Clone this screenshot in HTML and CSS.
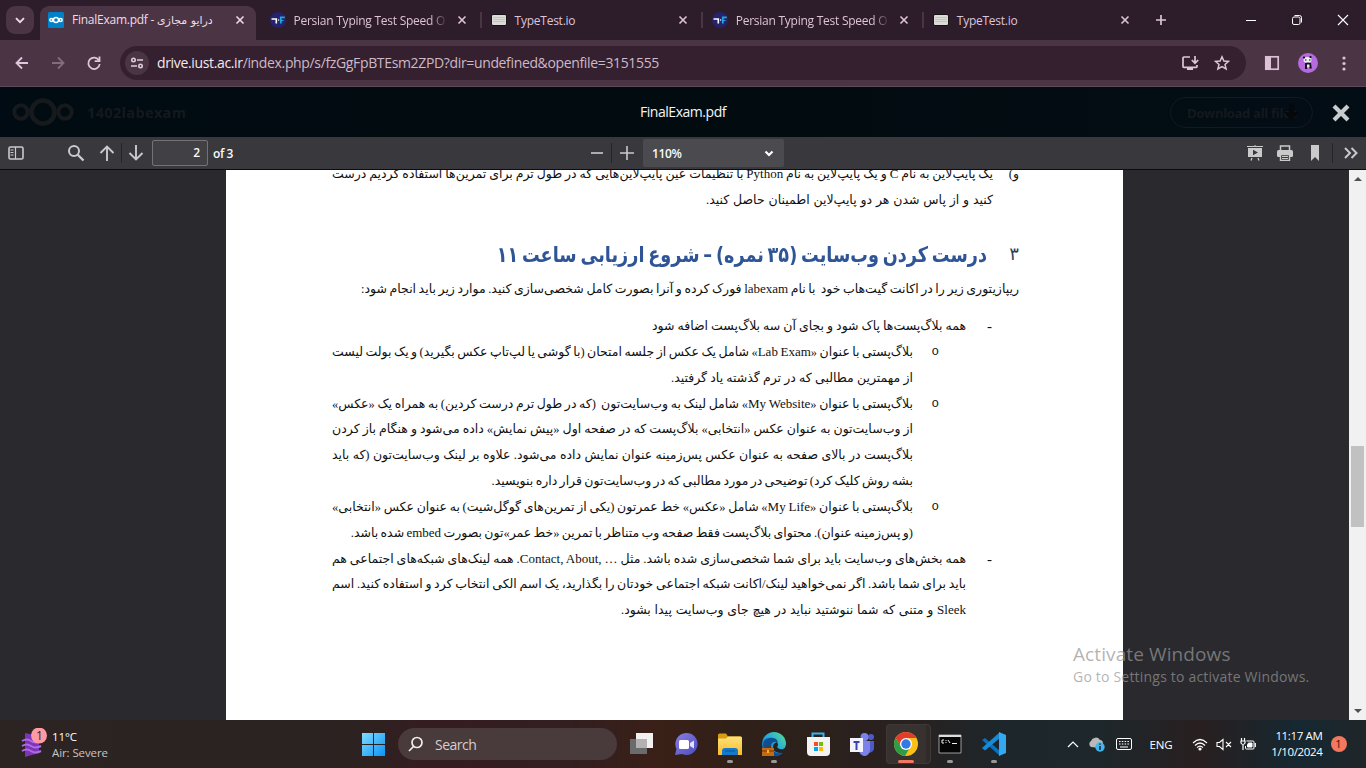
FILE: index.html
```html
<!DOCTYPE html>
<html lang="en">
<head>
<meta charset="utf-8">
<title>FinalExam.pdf</title>
<link rel="stylesheet" href="styles.css">
</head>
<body>
<svg class="defs" width="0" height="0">
  <defs>
    <symbol id="x" viewBox="0 0 10 10"><path d="M1.5 1.5l7 7M8.500 1.500l-7 7" fill="none" stroke="currentColor" stroke-width="1.600"/></symbol>
    <symbol id="tf" viewBox="0 0 16 16"><circle cx="8" cy="8" r="8" fill="#25236b"/><path d="M1.500 7h4.800v4.500" fill="none" stroke="#fff" stroke-width="1.600"/><path d="M10.800 11.500V5.300h4" fill="none" stroke="#29a3df" stroke-width="1.800"/><path d="M11 8.500h2.500" stroke="#29a3df" stroke-width="1.100"/><circle cx="8.600" cy="8" r=".7" fill="#fff"/></symbol>
    <symbol id="kb" viewBox="0 0 16 12"><rect x=".5" y=".5" width="15" height="11" rx="1.500" fill="#dcdcd8" stroke="#161313"/><path d="M2 3.500h12M2 5.500h12M2 7.500h12" stroke="#b9b9b5" stroke-width=".7"/></symbol>
    <linearGradient id="gw" x1="0" y1="0" x2="1" y2="1"><stop offset="0" stop-color="#7fdcff"/><stop offset="1" stop-color="#0a93f5"/></linearGradient>
    <linearGradient id="gf" x1="0" y1="0" x2="0" y2="1"><stop offset="0" stop-color="#ffe07a"/><stop offset="1" stop-color="#f8bd2c"/></linearGradient>
    <linearGradient id="ge" x1="0" y1="1" x2="1" y2="0"><stop offset="0" stop-color="#0b62b8"/><stop offset=".5" stop-color="#21a8de"/><stop offset="1" stop-color="#5fe08a"/></linearGradient>
    <linearGradient id="gc" x1="0" y1="0" x2="1" y2="1"><stop offset="0" stop-color="#8b7fe0"/><stop offset="1" stop-color="#4b4cc0"/></linearGradient>
  </defs>
</svg>

<div class="tabstrip">
  <div class="tabsearch"><svg width="10" height="7" viewBox="0 0 10 7"><path d="M1 1.200l4 4 4-4" fill="none" stroke="#eadbe5" stroke-width="1.900"/></svg></div>
  <div class="tab active">
    <svg class="fav" width="16" height="16"><rect width="16" height="16" rx="1.500" fill="#0082c9"/><g fill="none" stroke="#fff" stroke-width="1.400"><circle cx="8" cy="8" r="2.500"/><circle cx="3.300" cy="8" r="1.500"/><circle cx="12.700" cy="8" r="1.500"/></g></svg>
    <span class="title">FinalExam.pdf - <bdi class="fa">درایو مجازی</bdi></span>
    <svg class="x"><use href="#x"/></svg>
  </div>
  <div class="tab"><svg class="fav" width="16" height="16"><use href="#tf"/></svg><span class="title fade">Persian Typing Test Speed O</span><svg class="x"><use href="#x"/></svg></div>
  <div class="tab sep"><svg class="fav" width="16" height="12"><use href="#kb"/></svg><span class="title">TypeTest.io</span><svg class="x"><use href="#x"/></svg></div>
  <div class="tab sep"><svg class="fav" width="16" height="16"><use href="#tf"/></svg><span class="title fade">Persian Typing Test Speed O</span><svg class="x"><use href="#x"/></svg></div>
  <div class="tab sep"><svg class="fav" width="16" height="12"><use href="#kb"/></svg><span class="title">TypeTest.io</span><svg class="x"><use href="#x"/></svg></div>
  <div class="newtab"><svg width="12" height="12"><path d="M6 1v10M1 6h10" stroke="#dcc3d6" stroke-width="1.700"/></svg></div>
  <div class="winbtns">
    <svg width="12" height="12"><path d="M1 6.500h10" stroke="#fff"/></svg>
    <svg width="12" height="12" fill="none" stroke="#fff"><rect x="1.500" y="3" width="7.500" height="7.500" rx="1.500"/><path d="M3.500 1.500h5q2 0 2 2v5"/></svg>
    <svg width="12" height="12"><path d="M1 1l10 10M11 1L1 11" stroke="#fff" stroke-width="1.100"/></svg>
  </div>
</div>

<div class="toolbar">
  <div class="nav">
    <svg width="16" height="16" fill="none" stroke="#e0c6da" stroke-width="1.800"><path d="M14 8H3M8 2.500L2.500 8 8 13.500"/></svg>
    <svg width="16" height="16" fill="none" stroke="#836d7d" stroke-width="1.800"><path d="M2 8h11M8 2.500L13.500 8 8 13.500"/></svg>
    <svg width="16" height="16" fill="none" stroke="#e0c6da" stroke-width="1.800"><path d="M13 5.500A5.700 5.700 0 1 0 13.700 9"/><path d="M13.500 1.500v4.700H8.700"/></svg>
  </div>
  <div class="omnibox">
    <div class="site"><svg width="14" height="12" fill="none" stroke="#e0cbdc" stroke-width="1.600"><circle cx="3.500" cy="3" r="1.700"/><path d="M7 3h6M1 9h6"/><circle cx="10.500" cy="9" r="1.700"/></svg></div>
    <span class="url"><b>drive.iust.ac.ir</b>/index.php/s/fzGgFpBTEsm2ZPD?dir=undefined&amp;openfile=3151555</span>
    <svg class="install" width="18" height="16" fill="none" stroke="#dec6d9" stroke-width="1.700"><path d="M9 2H3Q2 2 2 3v8.500q0 .8.800.8h12.400q.8 0 .8-.8V10"/><path d="M6 14h6" stroke-width="2"/><path d="M14 1v7M10.800 5L14 8.200 17.200 5"/></svg>
    <svg width="16" height="16" fill="none" stroke="#dec6d9" stroke-width="1.500"><path d="M8 1.800l1.900 4.200 4.600.4-3.500 3 1.100 4.500L8 11.500l-4.100 2.400L5 9.400l-3.500-3 4.600-.4z"/></svg>
  </div>
  <div class="side">
    <svg width="16" height="16"><rect x="1.800" y="1.800" width="12.400" height="12.400" fill="none" stroke="#dcc0d6" stroke-width="1.700"/><path d="M1 1h6v14H1z" fill="#dcc0d6"/></svg>
    <svg width="20" height="20"><circle cx="10" cy="10" r="10" fill="#b56ae0"/><ellipse cx="9.500" cy="7" rx="4" ry="3" fill="#eee"/><circle cx="6" cy="4.500" r="1.100"/><circle cx="12.500" cy="4" r="1.100"/><path d="M7 10q3-1 6 0l.8 5.500H11.500L10 13l-1 3H7z" fill="#171320"/><path d="M9 11.500h2.500v3H9z" fill="#eee"/><path d="M7 7h1.500M11 7h1.500" stroke="#000"/></svg>
    <svg width="4" height="16" fill="#dcc3d6"><circle cx="2" cy="3" r="1.600"/><circle cx="2" cy="8.500" r="1.600"/><circle cx="2" cy="14" r="1.600"/></svg>
  </div>
</div>

<div class="cloudbar">
  <svg width="62" height="28" fill="none" stroke="#171a1d"><circle cx="31" cy="14" r="11.500" stroke-width="4.500"/><circle cx="9" cy="14" r="6.700" stroke-width="4"/><circle cx="53" cy="14" r="6.700" stroke-width="4"/></svg>
  <b class="share">1402labexam</b>
  <span class="fname">FinalExam.pdf</span>
  <div class="download">Download all files<svg width="16" height="20"><path d="M5 0h5v9h5l-7.500 9L0 9h5z" fill="#05090c"/></svg></div>
  <svg class="close" width="20" height="20"><path d="M3 3l14 14M17 3L3 17" stroke="#c9cccd" stroke-width="4.200"/></svg>
</div>

<div class="pdfbar">
  <svg class="i-side" width="16" height="14"><rect x="1" y="1" width="14" height="12" rx="1.500" fill="none" stroke="#cacacb" stroke-width="1.600"/><path d="M7.500 1v12M2.500 4h3M2.500 6.500h3M2.500 9h3" stroke="#cacacb" stroke-width="1.200"/></svg>
  <svg class="i-find" width="18" height="18" fill="none" stroke="#cacacb"><circle cx="7" cy="7" r="5" stroke-width="2"/><path d="M10.500 10.500l6 6" stroke-width="2.400"/></svg>
  <svg class="i-up" width="16" height="16" fill="none" stroke="#cacacb" stroke-width="1.900"><path d="M8 16V2M1.500 8L8 1.500 14.500 8"/></svg>
  <i class="vs"></i>
  <svg class="i-down" width="16" height="16" fill="none" stroke="#cacacb" stroke-width="1.900"><path d="M8 0v14M1.500 8L8 14.500 14.500 8"/></svg>
  <span class="pageno">2</span><span class="of">of 3</span>
  <div class="zoom">
    <svg width="14" height="14"><path d="M1 7h12" stroke="#cacacb" stroke-width="1.600"/></svg><i class="vs"></i>
    <svg width="14" height="14"><path d="M0 7h14M7 0v14" stroke="#cacacb" stroke-width="1.600"/></svg>
    <div class="select">110%<svg width="10" height="7"><path d="M1.500 1.500L5 5l3.500-3.500" fill="none" stroke="#fff" stroke-width="2.200"/></svg></div>
  </div>
  <div class="right">
    <svg width="16" height="16"><path d="M0 1.500h16" stroke="#cacacb"/><path d="M7.500 0h1v2h-1zM1 3h14v9H1z" fill="#cacacb"/><path d="M6 4.800l5 2.700-5 2.700z" fill="#38383d"/><path d="M5 13l-1 2.500M11 13l1 2.500" stroke="#cacacb" stroke-width="1.300"/></svg>
    <svg width="16" height="16"><path d="M3.500 5V1h9v4" fill="none" stroke="#cacacb" stroke-width="1.500"/><rect y="5" width="16" height="7" rx="1.500" fill="#cacacb"/><path d="M3.500 9.500h9v6h-9z" fill="#38383d" stroke="#cacacb" stroke-width="1.400"/><path d="M5 11.500h6M5 13.500h6" stroke="#cacacb"/></svg>
    <svg width="8" height="16"><path d="M0 0h8v16l-4-4-4 4z" fill="#cacacb"/></svg>
    <i class="vs"></i>
    <svg width="14" height="12" fill="none" stroke="#cacacb" stroke-width="2"><path d="M1 1l5 5-5 5M7.500 1l5 5-5 5"/></svg>
  </div>
</div>

<div class="viewer">
  <div class="page" lang="fa" dir="rtl">
    <div class="row first"><span class="mk">و)</span><p class="w661">یک پایپ‌لاین به نام <bdi>C</bdi> و یک پایپ‌لاین به نام <bdi>Python</bdi> با تنظیمات عین پایپ‌لاین‌هایی که در طول ترم برای تمرین‌ها استفاده کردیم درست</p></div>
    <div class="row i0"><p class="w287">کنید و از پاس شدن هر دو پایپ‌لاین اطمینان حاصل کنید.</p></div>
    <h2><span>۳</span><strong>درست کردن وب‌سایت (۳۵ نمره) – شروع ارزیابی ساعت ۱۱</strong></h2>
    <div class="row para"><p class="w658">ریپازیتوری زیر را در اکانت گیت‌هاب خود&nbsp; با نام <bdi>labexam</bdi> فورک کرده و آنرا بصورت کامل شخصی‌سازی کنید. موارد زیر باید انجام شود:</p></div>
    <div class="row i1"><span class="mk">-</span><p class="w314">همه بلاگ‌پست‌ها پاک شود و بجای آن سه بلاگ‌پست اضافه شود</p></div>
    <div class="row i2"><span class="mk">o</span><p>بلاگ‌پستی با عنوان «<bdi>Lab&nbsp;Exam</bdi>» شامل یک عکس از جلسه امتحان (با گوشی یا لپ‌تاپ عکس بگیرید) و یک بولت لیست</p></div>
    <div class="row i2"><p class="w242">از مهمترین مطالبی که در ترم گذشته یاد گرفتید.</p></div>
    <div class="row i2"><span class="mk">o</span><p>بلاگ‌پستی با عنوان «<bdi>My&nbsp;Website</bdi>» شامل لینک به وب‌سایت‌تون&nbsp; (که در طول ترم درست کردین) به همراه یک «عکس»</p></div>
    <div class="row i2"><p>از وب‌سایت‌تون به عنوان عکس «انتخابی» بلاگ‌پست که در صفحه اول «پیش نمایش» داده می‌شود و هنگام باز کردن</p></div>
    <div class="row i2"><p>بلاگ‌پست در بالای صفحه به عنوان عکس پس‌زمینه عنوان نمایش داده می‌شود. علاوه بر لینک وب‌سایت‌تون (که باید</p></div>
    <div class="row i2"><p class="w421">بشه روش کلیک کرد) توضیحی در مورد مطالبی که در وب‌سایت‌تون قرار داره بنویسید.</p></div>
    <div class="row i2"><span class="mk">o</span><p>بلاگ‌پستی با عنوان «<bdi>My&nbsp;Life</bdi>» شامل «عکس» خط عمرتون (یکی از تمرین‌های گوگل‌شیت) به عنوان عکس «انتخابی»</p></div>
    <div class="row i2"><p class="w562">(و پس‌زمینه عنوان). محتوای بلاگ‌پست فقط صفحه وب متناظر با تمرین «خط عمر»تون بصورت <bdi>embed</bdi> شده باشد.</p></div>
    <div class="row i1"><span class="mk">-</span><p>همه بخش‌های وب‌سایت باید برای شما شخصی‌سازی شده باشد. مثل <bdi dir="ltr">Contact, About, …</bdi>. همه لینک‌های شبکه‌های اجتماعی هم</p></div>
    <div class="row i1"><p>باید برای شما باشد. اگر نمی‌خواهید لینک/اکانت شبکه اجتماعی خودتان را بگذارید، یک اسم الکی انتخاب کرد و استفاده کنید. اسم</p></div>
    <div class="row i1"><p class="w345"><bdi>Sleek</bdi> و متنی که شما ننوشتید نباید در هیچ جای وب‌سایت پیدا بشود.</p></div>
  </div>
  <div class="scroll"><svg width="8" height="4"><path d="M0 4l4-4 4 4z" fill="#505050"/></svg><div class="thumb"></div><svg width="8" height="4"><path d="M0 0l4 4 4-4z" fill="#505050"/></svg></div>
  <div class="watermark"><div class="w1">Activate Windows</div><div class="w2">Go to Settings to activate Windows.</div></div>
</div>

<div class="taskbar">
  <div class="weather">
    <svg width="28" height="32"><path d="M4 5l14 3v17L4 29z" fill="#7b35b5"/><path d="M1 13q5-3 9 0t10 0M1 18q5-3 9 0t10 0M1 23q5-3 9 0t10 0" fill="none" stroke="#b06ae6" stroke-width="2"/><circle cx="18" cy="7.500" r="8" fill="#ff99a4"/><text x="15" y="12" font-size="12" font-family="Open Sans, sans-serif" fill="#3b1d22">1</text></svg>
    <div>11°C<br><span>Air: Severe</span></div>
  </div>
  <svg class="win" width="23" height="23" fill="url(#gw)"><path d="M0 0h11v11H0zM12 0h11v11H12zM0 12h11v11H0zM12 12h11v11H12z"/></svg>
  <div class="search"><svg width="16" height="16" fill="none" stroke="#eee" stroke-width="1.700"><circle cx="9" cy="6.500" r="5"/><path d="M5.500 10.500L1 15"/></svg>Search</div>
  <div class="apps">
    <div><svg width="26" height="26"><path d="M1 8h17v15H1z" fill="#696b6c"/><path d="M7 2h17v15H7z" fill="#f1f1f1"/><path d="M7 8h11v9H7z" fill="#b2b2b2"/></svg></div>
    <div><svg width="26" height="26"><path d="M13 2a11 11 0 1 1-4 21l-7 1 1.500-6A11 11 0 0 1 13 2z" fill="url(#gc)"/><rect x="6" y="9" width="10" height="9" rx="1.500" fill="#fff"/><path d="M17 12l4-2.500v8L17 15z" fill="#e5e0ff"/></svg></div>
    <div class="run"><svg width="26" height="26"><path d="M1 4q0-1.500 1.500-1.500H9l2 3h12Q25 5.500 25 7v6H1z" fill="#d99b12"/><path d="M1 7.500h8l2-2h12.500Q25 5.500 25 7v17H1z" fill="url(#gf)"/><path d="M5 24v-4q0-3 3-3h10q3 0 3 3v4z" fill="#1479cc"/><path d="M8 20h10" stroke="#0a5498"/></svg></div>
    <div class="run"><svg width="26" height="26"><circle cx="13" cy="13" r="12" fill="url(#ge)"/><path d="M2 14q0-6 6-7 7-1 9 4-6-1-7 4 0 5 6 7 4 1 7-1-4 5-10 4Q3 23 2 14z" fill="#0b4f94"/><path d="M16 11q2 3 0 5 2 3 6 2 3-1 3-5 2 9-4 9-9 0-9-6 0-4 4-5z" fill="#28211f"/><rect x="1" y="17" width="12" height="8" fill="#c56a12"/><path d="M1 20h12M4.500 17v-2h5v2" stroke="#6a350b" fill="none"/><path d="M6 19h2v3H6z" fill="#f7b32b"/></svg></div>
    <div><svg width="26" height="26"><path d="M7.500 7V2.500h11V7" fill="none" stroke="#35b5ec" stroke-width="2"/><path d="M2 6h23v15q0 4-4 4H6q-4 0-4-4z" fill="#f3f3f3"/><path d="M9 11h4v4H9z" fill="#f25022"/><path d="M14 11h4v4h-4z" fill="#7fba00"/><path d="M9 16h4v4H9z" fill="#00a4ef"/><path d="M14 16h4v4h-4z" fill="#ffb900"/></svg></div>
    <div><svg width="26" height="26"><circle cx="22" cy="6" r="3" fill="#5059c9"/><circle cx="15.500" cy="6" r="4" fill="#7b83eb"/><path d="M17 10h8v7q0 4-5 5z" fill="#5059c9"/><path d="M10 10h11v9q-1 6-6 6-4-1-5-5z" fill="#7b83eb"/><rect x="1" y="7" width="13" height="14" fill="#f4f4ff"/><path d="M4.500 11h6M7.500 11v8" stroke="#3d43a8" stroke-width="2"/></svg></div>
    <div class="run on"><svg width="26" height="26"><circle cx="13" cy="13" r="12" fill="#fbc116"/><path d="M2.600 7A12 12 0 0 1 23.400 7H13L9 17z" fill="#e33b2e"/><path d="M2.600 7A12 12 0 0 0 12 25l5.500-9.500-9.500 0z" fill="#2b9e47"/><circle cx="13" cy="13" r="6" fill="#fff"/><circle cx="13" cy="13" r="4.700" fill="#3378e8"/></svg></div>
    <div class="run"><svg width="26" height="26"><path d="M2 4h22v18H2z" fill="#060606" stroke="#9c9c9c"/><path d="M2 4h22v2H2z" fill="#ddd"/><path d="M7 9H5v3h2M9 9v1M9 11v1M11 9l2 3M15 12.500h5" stroke="#eee" fill="none" stroke-width="1"/></svg></div>
    <div class="run"><svg width="26" height="26"><path d="M1 9l3-2 15 13v5z" fill="#0a71bf"/><path d="M1 17l3 2.500L19 7V1z" fill="#168bd8"/><path d="M18 1l7 3v18l-7 3z" fill="#35a9f0"/></svg></div>
  </div>
  <div class="tray">
    <svg class="t1" width="12" height="8"><path d="M1 7l5-5 5 5" fill="none" stroke="#fff" stroke-width="1.200"/></svg>
    <svg class="t2" width="17" height="15"><path d="M3 10a3.500 3.500 0 0 1 0-6 5 5 0 0 1 9-1q3 0 3 4l-2 4z" fill="#b9b9b9"/><circle cx="12" cy="10" r="4.700" fill="#43b4ec"/><path d="M12 9v4M12 6.500v1.300" stroke="#10202a" stroke-width="1.400"/></svg>
    <svg class="t3" width="16" height="12" fill="none" stroke="#fff"><rect x=".5" y=".5" width="15" height="11" rx="1.500"/><path d="M3 3.500h10M3 6h10" stroke-dasharray="1.500 1.300"/><path d="M4 9h8"/></svg>
    <span class="eng">ENG</span>
    <svg class="t4" width="16" height="13" fill="none" stroke="#fff" stroke-width="1.200"><path d="M1 5q7-7 14 0M3 7.500q5-5 10 0M5 9.700q3-3 6 0"/><circle cx="8" cy="11" r="1" fill="#fff"/></svg>
    <svg class="t5" width="16" height="13" fill="none" stroke="#fff" stroke-width="1.100"><path d="M1 4.500h2.500l3.500-3v10l-3.500-3H1zM10 4l5 5M15 4l-5 5"/></svg>
    <svg class="t6" width="16" height="13" fill="none" stroke="#fff"><path d="M6.500 3H13q1 0 1 1v6q0 1-1 1H6.500q-1 0-1-1V8"/><path d="M8.500 5H12v4H7.500V7z" fill="#fff"/><path d="M15.300 5v4M1.500 0v3M4.500 0v3M1 3h4v2q-2 3-4 0zM3 6v6" stroke-width="1.200"/></svg>
    <div class="clock">11:17 AM<br>1/10/2024</div>
    <span class="badge">1</span>
  </div>
</div>
</body>
</html>
```
FILE: styles.css
```css
* { box-sizing: border-box; }
body { margin: 0; width: 1366px; height: 768px; overflow: hidden; display: flex; flex-direction: column; font-family: "Open Sans", "Noto Sans", sans-serif; background: #2a2a2e; }
svg { display: block; flex: none; }
.defs { position: absolute; }

.tabstrip { height: 40px; flex: none; display: flex; align-items: flex-start; background: #2d1c2a; padding: 6px 0 0 6px; }
.tabsearch { width: 28px; height: 28px; border-radius: 9px; background: #4b3545; display: flex; align-items: center; justify-content: center; margin-right: 6px; }
.tab { width: 221.1px; height: 34px; padding: 0 11px 6px 8px; display: flex; align-items: center; color: #dec4d8; position: relative; }
.tab.active { width: 216px; margin-right: 5.5px; padding-right: 11px; background: #4b3545; border-radius: 9px 9px 0 0; color: #ecdde8; }
.tab:not(.active) { padding-right: 16px; }
.tab.sep::before { content: ""; position: absolute; left: -3px; top: 6px; width: 2px; height: 16px; background: #4b3545; }
.tab .title { font-size: 12px; margin-left: 8px; flex: 1; white-space: nowrap; letter-spacing: -.25px; margin-right: 10px; line-height: 20px; padding-top: 1px; }
.tab .fa { font-family: "DejaVu Sans", sans-serif; font-size: 11px; letter-spacing: 0; }
.tab .fade { -webkit-mask-image: linear-gradient(90deg, #000 136px, transparent 154px); }
.tab .x { width: 10px; height: 10px; }
.newtab { padding: 8px 0 0 9px; width: 50px; }
.winbtns { display: flex; gap: 34px; padding-top: 8px; margin-left: auto; padding-right: 17px; }

.toolbar { height: 47px; flex: none; background: #4b3545; border-bottom: 1px solid #5d4a57; display: flex; align-items: center; }
.nav { display: flex; gap: 20px; padding-left: 14px; width: 120px; }
.omnibox { width: 1126px; height: 34px; border-radius: 17px; background: #34202f; display: flex; align-items: center; padding: 0 16px 0 5px; }
.site { width: 24px; height: 24px; border-radius: 50%; background: #4b3545; display: flex; align-items: center; justify-content: center; }
.url { font-size: 14px; letter-spacing: -.35px; margin-left: 8px; padding-bottom: 1px; color: #cdb9c8; flex: 1; white-space: nowrap; }
.url b { font-weight: 400; color: #f4e8f1; }
.install { margin-right: 15px; }
.side { display: flex; align-items: center; margin-left: 18px; }
.side svg:nth-child(2) { margin: 0 24px 0 18px; }

.cloudbar { height: 50px; flex: none; background: linear-gradient(90deg, #010b13, #020b0f 50%, #030d15); display: flex; align-items: center; padding-left: 12px; position: relative; }
.share { font-size: 14.500px; color: #15191c; margin-left: 13px; letter-spacing: .35px; }
.fname { position: absolute; left: 0; right: 0; text-align: center; color: #f6f6f6; font-size: 14px; letter-spacing: -.45px; line-height: 20px; }
.download { margin-left: auto; width: 143px; height: 31px; border: 1px solid #14191d; border-radius: 16px; color: #14191c; font-weight: 700; font-size: 13px; letter-spacing: -.3px; line-height: 30px; padding-left: 16px; white-space: nowrap; position: relative; }
.download svg { position: absolute; left: 113px; top: 5px; }
.close { margin: 1px 15px 0 18px; }

.pdfbar { height: 33px; flex: none; background: #38383d; border-bottom: 1px solid #0c0c0d; display: flex; align-items: center; padding-left: 8px; color: #f9f9fa; font-size: 12px; font-weight: 600; position: relative; }
.i-find { margin: 0 14px 0 43px; }
.vs { width: 1px; height: 20px; background: #252529; }
.pdfbar > .vs { margin: 0 6px; }
.pageno { width: 56px; height: 26px; border: 1px solid #737376; background: #404045; border-radius: 2px; margin-left: 8px; text-align: right; line-height: 24px; padding-right: 7px; }
.of { margin-left: 5px; letter-spacing: -.4px; }
.zoom { display: flex; align-items: center; margin-left: 357px; }
.zoom .vs { margin: 0 8px 0 7px; }
.select { width: 141px; height: 28px; border-radius: 2px; background: #4a4a4f; margin-left: 9px; padding: 0 10px 0 9px; display: flex; justify-content: space-between; align-items: center; letter-spacing: -.4px; }
.right { display: flex; align-items: center; margin-left: auto; padding-right: 8px; }
.right svg { margin-right: 14px; }
.right svg:nth-of-type(2) { margin-right: 18px; }
.right svg:nth-of-type(3) { margin-right: 13px; }
.right .vs { margin-right: 11px; }
.right svg:last-child { margin-right: 0; }

.viewer { height: 550px; flex: none; position: relative; background: #2a2a2e; display: flex; justify-content: space-between; overflow: hidden; }
.page { margin-left: 226px; width: 897px; height: 550px; background: #fff; padding: 0 104px 0 106px; font-family: "Liberation Serif", "DejaVu Sans", serif; font-size: 12.5px; color: #111; overflow: hidden; }
.row { display: flex; height: 25.85px; line-height: 26px; position: relative; }
.row p { margin: 0; flex: none; width: 581px; text-align-last: justify; white-space: nowrap; word-spacing: -.8px; }
.row bdi { font-size: 13px; }
.row .mk { position: absolute; right: 0; }
.first { margin-top: -9px; padding-right: 26px; }
.i0 { padding-right: 26px; }
.i1 { padding-right: 53px; }
.i2 { padding-right: 106px; }
.i1 .mk { right: 27px; font-size: 15px; }
.i2 .mk { right: 80px; font-size: 12.5px; font-family: "Liberation Mono", monospace; }
.i1 p { width: 634px; }
.row .w661 { width: 661px; } .row .w287 { width: 287px; } .row .w658 { width: 658px; } .row .w314 { width: 314px; }
.row .w242 { width: 242px; } .row .w421 { width: 421px; } .row .w562 { width: 562px; } .row .w345 { width: 345px; }
.para { margin-bottom: 11.5px; }
.page h2 { margin: 22px 0 2px; height: 39px; display: flex; line-height: 39px; font-weight: 400; font-size: 18px; color: #2f5597; }
.page h2 span { width: 32px; flex: none; color: #333f5c; }
.page h2 strong { font-family: "DejaVu Sans", sans-serif; font-size: 21.5px; flex: none; width: 598px; transform: scaleX(.82); transform-origin: right center; text-align-last: justify; white-space: nowrap; word-spacing: -3px; }

.scroll { width: 17px; background: #f1f1f1; display: flex; flex-direction: column; align-items: center; justify-content: space-between; padding: 7px 0; position: relative; }
.thumb { position: absolute; top: 276px; left: 2px; width: 13px; height: 81px; background: #c1c1c1; }
.watermark { position: absolute; left: 1073px; top: 472px; color: rgba(150,150,150,.72); white-space: nowrap; }
.w1 { font-size: 19px; line-height: 24px; letter-spacing: .1px; }
.w2 { font-size: 14px; line-height: 21px; letter-spacing: .2px; }

.taskbar { height: 48px; flex: none; display: flex; align-items: center; background: linear-gradient(90deg, #2b2423 0, #2c2321 350px, #351c20 430px, #331e20 570px, #3a2017 660px, #2f2019 740px, #28211f 900px, #1d262b 1010px, #1e272b 1100px, #281f20 1200px, #152831 1300px, #1f2528); color: #fff; font-size: 12px; }
.weather { width: 362px; padding-left: 21px; display: flex; gap: 3px; align-items: center; line-height: 16px; font-size: 11.500px; letter-spacing: -.1px; }
.weather > div { padding-top: 1px; }
.weather span { color: #c9c4c3; }
.search { margin-left: 13px; width: 219px; height: 32px; border-radius: 16px; background: #493a3b; display: flex; align-items: center; gap: 11px; padding-left: 10px; font-size: 14px; color: #d5cecd; letter-spacing: -.5px; }
.apps { display: flex; margin-left: 3.5px; }
.apps > div { width: 43.9px; height: 48px; display: flex; align-items: center; justify-content: center; position: relative; }
.apps svg { position: relative; z-index: 1; }
.run::after { content: ""; position: absolute; left: 19px; bottom: 5px; width: 6px; height: 3px; border-radius: 2px; background: #999; }
.on::before { content: ""; position: absolute; left: 2px; top: 4px; width: 40px; height: 40px; border-radius: 4px; background: #37312f; border-right: 5px solid #302b29; outline: 1px solid #3e3937; outline-offset: -1px; }
.on::after { left: 14px; width: 16px; background: #f3785e; }
.tray { flex: 1; display: flex; align-items: center; padding-left: 51px; }
.t2 { margin-left: 9px; } .t3 { margin-left: 11px; }
.eng { margin-left: 18px; width: 42px; font-size: 11.500px; letter-spacing: -.2px; }
.t5 { margin-left: 8px; } .t6 { margin-left: 8px; }
.clock { width: 67px; text-align: right; line-height: 16px; font-size: 11.500px; letter-spacing: -.35px; }
.badge { margin-left: 8px; width: 16px; height: 16px; border-radius: 50%; background: #f3785e; color: #35140c; font-size: 11px; line-height: 16px; text-align: center; }
```
